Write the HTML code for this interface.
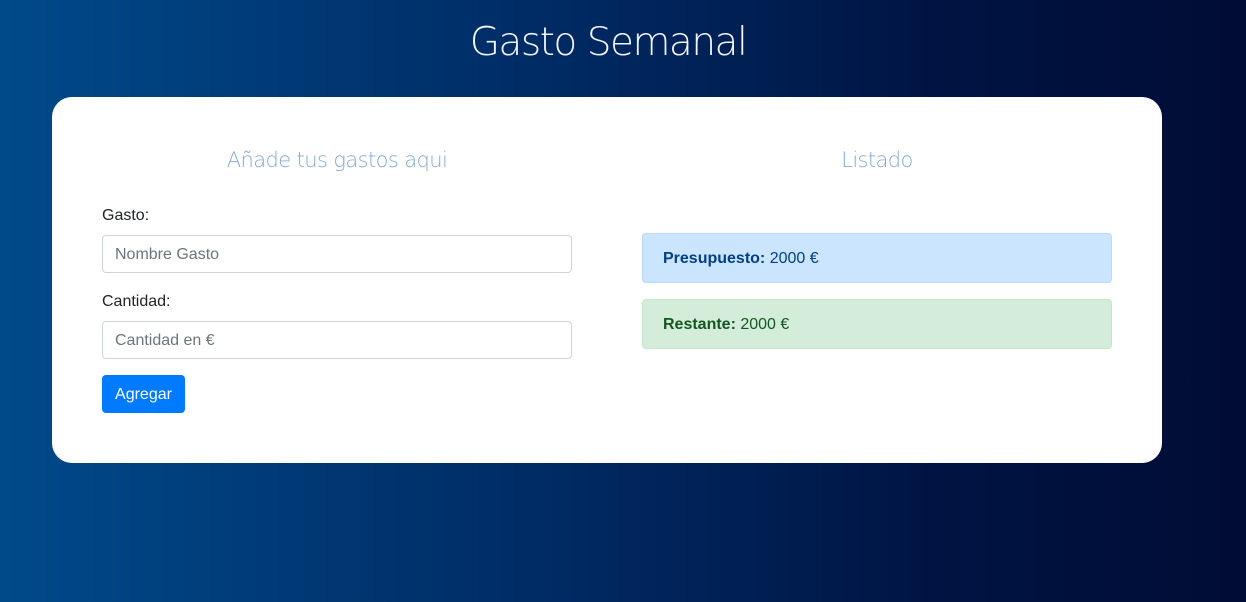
<!DOCTYPE html>
<html><head><meta charset="utf-8"><style>
html,body{margin:0;width:1246px;height:602px;overflow:hidden}
body{background:linear-gradient(90deg,#004a8a 0%,#002a63 45%,#001443 75%,#000c35 100%);font-family:"Liberation Sans",sans-serif}
h1{position:absolute;left:0;width:1216px;top:20px;margin:0;text-align:center;color:#f2f4ff;font-family:"DejaVu Sans",sans-serif;font-weight:200;font-size:39px;letter-spacing:-1.5px}
.card{position:absolute;left:52px;top:97px;width:1110px;height:366px;background:#fff;border-radius:20px}
h2{position:absolute;margin:0;font-family:"DejaVu Sans",sans-serif;font-weight:200;font-size:21px;color:#86a9d4;text-align:center;letter-spacing:-0.6px}
label{position:absolute;left:50px;font-size:16px;color:#212529}
.in{position:absolute;left:50px;box-sizing:border-box;width:470px;height:38px;border:1px solid #ced4da;border-radius:4px;color:#6c757d;font-size:16px;padding:10px 12px 8px}
.btn{position:absolute;left:50px;top:278px;width:83px;height:38px;background:#007bff;color:#fff;border-radius:4px;font-size:16px;line-height:40px;text-align:center}
.al{position:absolute;left:590px;width:470px;height:50px;box-sizing:border-box;border-radius:4px;padding:0 20px;line-height:50px;font-size:16px}
</style></head><body>
<h1>Gasto Semanal</h1>
<div class="card">
<h2 style="left:50px;width:470px;top:51px">Añade tus gastos aqui</h2>
<h2 style="left:590px;width:470px;top:51px">Listado</h2>
<label style="top:110px">Gasto:</label>
<div class="in" style="top:138px">Nombre Gasto</div>
<label style="top:196px">Cantidad:</label>
<div class="in" style="top:224px">Cantidad en €</div>
<div class="btn">Agregar</div>
<div class="al" style="top:136px;background:#cce5ff;border:1px solid #b8daff;color:#004085"><b>Presupuesto:</b> 2000 €</div>
<div class="al" style="top:202px;background:#d4edda;border:1px solid #c3e6cb;color:#155724"><b>Restante:</b> 2000 €</div>
</div>
</body></html>
